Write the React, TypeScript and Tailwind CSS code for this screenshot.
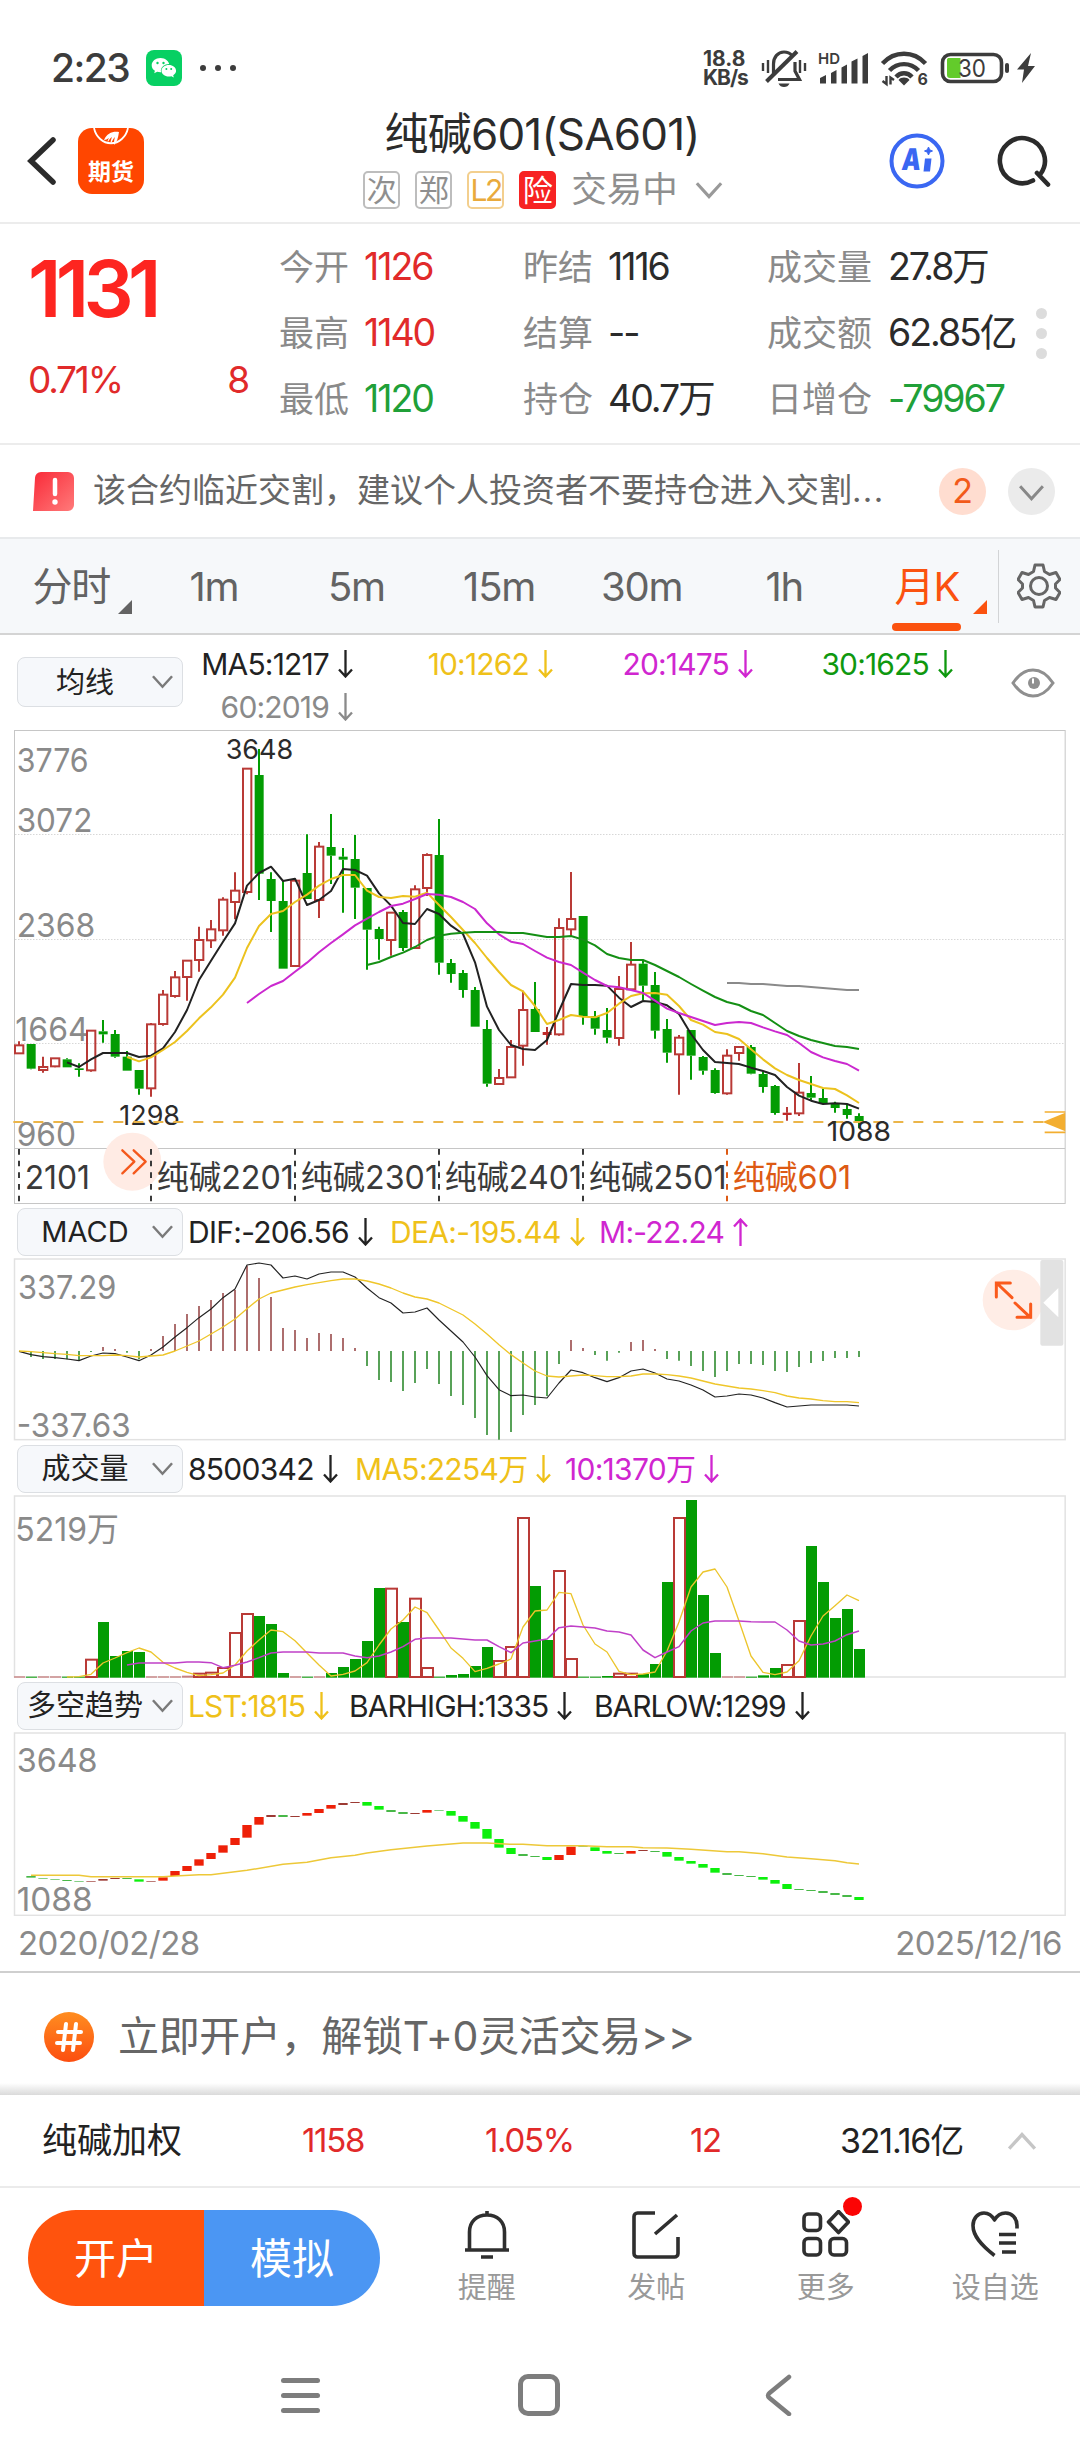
import type { ReactNode } from 'react';
import { clsx } from 'clsx';

// Chart units: three per pixel, one candle every 36 units.
const STEP = 36;
const FIRST_X = 57;
const RED = '#b93a36';
const GREEN = '#039c03';

const xAt = (i: number) => FIRST_X + i * STEP;
const toPoints = (values: number[], start = 0) => values.map((y, i) => `${xAt(i + start)},${y}`).join(' ');

type Candle = ['r' | 'g', number, number, number, number];

// [direction, high, body top, body bottom, low]
const CANDLES: Candle[] = [
  ['r', 964, 976, 1000, 1000], ['g', 972, 972, 1046, 1048], ['r', 1010, 1041, 1050, 1058], ['r', 1015, 1015, 1039, 1042],
  ['g', 1015, 1018, 1042, 1042], ['g', 1030, 1045, 1050, 1070], ['r', 932, 932, 1051, 1055], ['g', 900, 934, 943, 968],
  ['g', 930, 942, 1010, 1013], ['g', 993, 1010, 1052, 1052], ['g', 1050, 1050, 1106, 1124], ['r', 909, 913, 1105, 1130],
  ['r', 810, 824, 912, 917], ['r', 753, 772, 828, 833], ['r', 721, 722, 771, 842], ['r', 620, 660, 720, 755],
  ['r', 600, 628, 661, 684], ['r', 532, 539, 631, 647], ['r', 457, 512, 546, 598], ['r', 146, 146, 516, 523],
  ['g', 87, 165, 461, 540], ['g', 457, 477, 543, 636], ['g', 480, 543, 746, 746], ['r', 478, 482, 738, 738],
  ['g', 343, 459, 537, 537], ['r', 366, 380, 540, 594], ['g', 282, 381, 407, 492], ['g', 384, 410, 419, 578],
  ['g', 345, 417, 503, 597], ['g', 504, 504, 629, 749], ['g', 620, 627, 657, 719], ['r', 577, 578, 660, 707],
  ['g', 570, 576, 684, 693], ['r', 496, 508, 684, 684], ['r', 400, 405, 504, 528], ['g', 297, 405, 728, 764],
  ['g', 717, 729, 762, 788], ['g', 750, 759, 810, 833], ['g', 801, 810, 920, 920], ['g', 900, 927, 1091, 1100],
  ['r', 1047, 1074, 1092, 1094], ['r', 960, 981, 1072, 1073], ['r', 812, 870, 977, 1037], ['g', 786, 867, 936, 936],
  ['r', 921, 936, 945, 974], ['r', 595, 624, 943, 947], ['r', 456, 597, 628, 648], ['g', 588, 588, 891, 914],
  ['g', 873, 888, 926, 944], ['g', 864, 930, 953, 970], ['r', 768, 807, 954, 977], ['r', 666, 734, 808, 808],
  ['g', 720, 731, 797, 840], ['g', 756, 795, 932, 956], ['g', 897, 927, 998, 1028], ['r', 945, 953, 1003, 1124],
  ['g', 930, 930, 1007, 1079], ['g', 1008, 1011, 1052, 1064], ['g', 1045, 1050, 1119, 1121], ['r', 988, 1007, 1120, 1124],
  ['r', 981, 981, 999, 1022], ['g', 975, 981, 1061, 1063], ['g', 1055, 1062, 1101, 1118], ['g', 1095, 1098, 1179, 1184],
  ['r', 1161, 1178, 1185, 1202], ['r', 1029, 1118, 1180, 1188], ['g', 1068, 1119, 1133, 1143], ['g', 1106, 1134, 1151, 1151],
  ['g', 1145, 1150, 1164, 1178], ['g', 1155, 1167, 1185, 1196], ['g', 1180, 1188, 1203, 1225],
];

const MA5 = [
  1027, 1041, 1018, 999, 999, 999, 1011, 1007, 985, 936, 870, 780, 722, 665, 610, 497, 459, 440, 483, 476, 555, 540, 513,
  447, 450, 467, 520, 557, 609, 612, 567, 582, 617, 642, 727, 860, 930, 975, 987, 990, 960, 873, 792, 795, 795, 797, 833,
  861, 843, 846, 856, 882, 942, 990, 1026, 1029, 1032, 1043, 1053, 1065, 1101, 1127, 1142, 1152, 1150, 1152, 1166,
];
const MA10 = [
  1011, 1024, 1012, 990, 966, 933, 895, 862, 824, 773, 684, 618, 582, 573, 546, 524, 497, 477, 465, 465, 512, 531, 534,
  528, 530, 518, 555, 591, 630, 669, 714, 756, 795, 814, 858, 912, 900, 885, 890, 892, 879, 851, 828, 820, 819, 824, 858,
  900, 914, 936, 942, 957, 988, 1018, 1045, 1065, 1080, 1092, 1104, 1107, 1126, 1149,
];
const MA20 = [
  849, 822, 798, 783, 755, 728, 697, 669, 643, 616, 596, 576, 558, 551, 537, 522, 524, 531, 546, 567, 610, 643, 665, 672,
  693, 713, 726, 735, 758, 780, 798, 802, 810, 819, 842, 866, 879, 891, 903, 915, 909, 906, 909, 922, 934, 945, 969, 996,
  1012, 1023, 1032, 1052,
];
const MA30 = [
  735, 726, 711, 698, 681, 660, 647, 641, 638, 636, 636, 636, 639, 639, 645, 651, 651, 648, 659, 676, 702, 714, 720, 720,
  735, 753, 771, 792, 812, 831, 846, 855, 873, 885, 909, 933, 948, 960, 969, 978, 981, 987,
];
const MA60 = [789, 789, 792, 792, 795, 798, 798, 801, 804, 807, 810, 810];

const MACD_ZERO = 453;
const MACD_BARS = [
  453, 471, 477, 477, 478, 482, 456, 441, 447, 458, 478, 447, 408, 372, 342, 318, 300, 279, 270, 197, 234, 291, 384, 390,
  414, 399, 402, 414, 444, 498, 540, 546, 573, 549, 507, 552, 588, 615, 654, 705, 719, 696, 645, 615, 588, 492, 420, 444,
  465, 482, 458, 426, 420, 447, 477, 482, 498, 513, 531, 513, 492, 492, 495, 513, 516, 501, 489, 483, 474, 474, 471,
];
const DIF = [
  454, 464, 470, 473, 477, 482, 468, 459, 461, 471, 482, 465, 441, 411, 383, 353, 327, 293, 267, 195, 189, 195, 234, 228,
  237, 222, 216, 216, 231, 264, 293, 309, 339, 336, 324, 360, 393, 426, 471, 527, 569, 587, 585, 591, 594, 549, 510, 518,
  533, 545, 533, 513, 507, 519, 537, 543, 555, 570, 591, 588, 582, 585, 594, 608, 621, 618, 615, 615, 615, 615, 618,
];
const DEA = [
  453, 455, 458, 461, 463, 467, 467, 467, 465, 467, 471, 468, 465, 453, 438, 423, 402, 381, 357, 326, 297, 279, 270, 261,
  254, 248, 242, 237, 237, 243, 252, 264, 279, 291, 297, 309, 327, 345, 372, 402, 434, 464, 489, 513, 528, 531, 528, 525,
  527, 530, 530, 528, 522, 522, 524, 528, 534, 543, 552, 558, 564, 567, 572, 578, 588, 594, 597, 602, 605, 605, 608,
];

const VOLUME_BASE = 711;
const VOLUMES = [
  709, 710, 709, 709, 710, 710, 656, 546, 648, 633, 636, 709, 709, 709, 707, 698, 695, 681, 576, 519, 528, 552, 699, 709,
  710, 709, 699, 681, 657, 603, 444, 443, 546, 473, 681, 710, 705, 702, 678, 621, 660, 618, 231, 438, 600, 390, 654, 710,
  710, 708, 698, 698, 702, 672, 426, 231, 180, 465, 639, 709, 709, 710, 706, 684, 672, 540, 318, 426, 534, 507, 627,
];
const VOL_MA5 = [
  711, 710, 703, 669, 654, 638, 624, 636, 667, 684, 697, 707, 704, 699, 675, 633, 600, 570, 575, 602, 639, 675, 708, 703,
  693, 668, 615, 567, 540, 501, 518, 570, 624, 655, 695, 685, 672, 657, 561, 513, 510, 457, 461, 555, 612, 636, 694, 704,
  702, 696, 633, 546, 441, 396, 387, 441, 543, 648, 697, 704, 696, 662, 588, 528, 497, 465, 482,
];
const VOL_MA10 = [
  675, 669, 669, 669, 669, 666, 666, 668, 683, 676, 666, 653, 639, 636, 636, 636, 639, 639, 639, 648, 653, 648, 636, 620,
  598, 594, 594, 594, 597, 600, 600, 620, 638, 609, 603, 597, 563, 558, 561, 564, 573, 576, 585, 630, 653, 636, 620, 573,
  549, 543, 543, 543, 545, 546, 546, 570, 603, 615, 612, 603, 584, 573,
];

// [direction, top, bottom], starting from the second candle
const TREND: ['r' | 'g', number, number][] = [
  ['g', 558, 563], ['g', 565, 567], ['g', 567, 569], ['g', 570, 573], ['g', 573, 575], ['r', 573, 575], ['r', 567, 572],
  ['r', 564, 567], ['g', 564, 567], ['g', 568, 575], ['r', 573, 575], ['r', 562, 572], ['r', 543, 558], ['r', 528, 543],
  ['r', 508, 527], ['r', 489, 507], ['r', 466, 488], ['r', 444, 465], ['r', 405, 443], ['r', 381, 404], ['r', 375, 381],
  ['g', 375, 381], ['r', 378, 381], ['r', 369, 377], ['r', 357, 369], ['r', 345, 356], ['r', 339, 345], ['r', 336, 339],
  ['g', 336, 347], ['g', 348, 359], ['g', 360, 366], ['g', 366, 372], ['r', 369, 372], ['r', 360, 368], ['g', 360, 362],
  ['g', 363, 377], ['g', 378, 395], ['g', 396, 416], ['g', 417, 446], ['g', 447, 473], ['g', 474, 492], ['g', 492, 498],
  ['g', 498, 501], ['g', 501, 510], ['r', 495, 510], ['r', 470, 495], ['g', 468, 470], ['g', 472, 483], ['g', 483, 491],
  ['g', 489, 492], ['r', 483, 491], ['r', 480, 483], ['g', 483, 486], ['g', 486, 500], ['g', 501, 512], ['g', 513, 521],
  ['g', 522, 533], ['g', 534, 548], ['g', 549, 555], ['g', 555, 558], ['g', 558, 561], ['g', 561, 569], ['g', 570, 581],
  ['g', 582, 597], ['g', 597, 600], ['g', 600, 603], ['g', 603, 609], ['g', 609, 615], ['g', 615, 621], ['g', 621, 630],
];
const LST: [number, number][] = [
  [1, 556], [5, 556], [6, 560], [12, 560], [13, 558], [15, 554], [16, 554], [17, 550], [19, 541], [22, 523], [24, 517],
  [26, 503], [28, 496], [29, 489], [31, 479], [33, 472], [34, 468], [37, 459], [39, 459], [41, 463], [42, 463], [44, 467],
  [47, 467], [49, 470], [51, 470], [52, 473], [54, 474], [56, 478], [59, 485], [60, 485], [62, 491], [64, 501], [66, 506],
  [68, 512], [69, 518], [70, 522],
];

const QUOTES = [
  [
    { label: '今开', value: '1126', color: 'text-[#e12a2a]' },
    { label: '最高', value: '1140', color: 'text-[#e12a2a]' },
    { label: '最低', value: '1120', color: 'text-[#20a038]' },
  ],
  [
    { label: '昨结', value: '1116', color: 'text-[#2b2b2b]' },
    { label: '结算', value: '--', color: 'text-[#2b2b2b]' },
    { label: '持仓', value: '40.7万', color: 'text-[#2b2b2b]' },
  ],
  [
    { label: '成交量', value: '27.8万', color: 'text-[#2b2b2b]' },
    { label: '成交额', value: '62.85亿', color: 'text-[#2b2b2b]' },
    { label: '日增仓', value: '-79967', color: 'text-[#20a038]' },
  ],
];

const PERIODS = ['分时', '1m', '5m', '15m', '30m', '1h', '月K'];

const CONTRACTS = [
  { at: 57, text: '2101', x: 74, w: 196 },
  { at: 453, text: '纯碱2201', x: 470, w: 412 },
  { at: 885, text: '纯碱2301', x: 902, w: 412 },
  { at: 1317, text: '纯碱2401', x: 1334, w: 412 },
  { at: 1749, text: '纯碱2501', x: 1766, w: 414 },
  { at: 2181, text: '纯碱601', x: 2198, w: 356 },
];

interface LabelProps {
  x: number;
  y: number;
  w: number;
  size?: number;
  fill?: string;
  children: string;
}

function Label({ x, y, w, size = 99, fill = '#8a8a8a', children }: LabelProps) {
  return (
    <text x={x} y={y} fontSize={size} fill={fill} textLength={w} lengthAdjust="spacingAndGlyphs">
      {children}
    </text>
  );
}

function Line({ points, color, width = 6 }: { points: string; color: string; width?: number }) {
  return <polyline points={points} fill="none" stroke={color} strokeWidth={width} strokeLinejoin="round" />;
}

function Chevron({ className, up }: { className?: string; up?: boolean }) {
  return (
    <svg viewBox="0 0 22 14" className={className} fill="none" stroke="currentColor" strokeWidth="2.6">
      <path d={up ? 'M1 13 11 2l10 11' : 'M1 1l10 11L21 1'} />
    </svg>
  );
}

function Arrow({ up }: { up?: boolean }) {
  return (
    <svg viewBox="0 0 15 28" className={clsx('ml-[9px] h-7 w-[15px] shrink-0', up && 'rotate-180')} fill="none" stroke="currentColor" strokeWidth="2.3">
      <path d="M7.5 0v26M1 19.5l6.5 7 6.5-7" />
    </svg>
  );
}

function Legend({ text, color, up, className }: { text: string; color: string; up?: boolean; className?: string }) {
  return (
    <div className={clsx('flex items-center whitespace-nowrap text-[30px] leading-none', color, className)}>
      <span>{text}</span>
      <Arrow up={up} />
    </div>
  );
}

function Picker({ label, tall }: { label: string; tall?: boolean }) {
  return (
    <button
      className={clsx(
        'flex w-[166px] shrink-0 items-center rounded-lg border border-[#dcdfe3] bg-[#f6f8fb] pr-[9px] text-[29px] leading-none text-[#222]',
        tall ? 'h-[50px]' : 'h-12',
      )}
    >
      <span className="flex-1 whitespace-nowrap text-center">{label}</span>
      <Chevron className="h-[14px] w-[21px] shrink-0 text-[#7a7a7a]" />
    </button>
  );
}

function StatusBar() {
  return (
    <div className="flex h-[106px] items-center pt-[30px] pl-[51px] text-[#3c3c3c]">
      <span className="w-[95px] text-[39px] font-medium tracking-[-0.04em]">2:23</span>
      <svg viewBox="0 0 36 36" className="size-9">
        <rect width="36" height="36" rx="8" fill="#07d063" />
        <path d="M14.5 8C9.600 8 5.700 11.200 5.700 15.200c0 2.300 1.200 4.200 3.200 5.500l-.7 2.600 3-1.500c1 .3 2.200.5 3.300.5 4.900 0 8.800-3.200 8.800-7.100S19.400 8 14.500 8z" fill="#fff" />
        <ellipse cx="22.800" cy="20.700" rx="8" ry="6.700" fill="#07d063" />
        <path d="M22.800 15c-4.100 0-7.300 2.600-7.300 5.800s3.200 5.800 7.300 5.800c.9 0 1.800-.1 2.600-.4l2.400 1.400-.6-2.300c1.800-1.100 2.900-2.700 2.900-4.500 0-3.200-3.200-5.800-7.300-5.800z" fill="#fff" />
        <g fill="#07d063">
          <circle cx="11.500" cy="13" r="1.200" />
          <circle cx="17.500" cy="13" r="1.200" />
          <circle cx="20.400" cy="19" r="1" />
          <circle cx="25.200" cy="19" r="1" />
        </g>
      </svg>
      <div className="ml-[18px] flex gap-[9px]">
        <i className="size-[6px] rounded-full bg-[#3c3c3c]" />
        <i className="size-[6px] rounded-full bg-[#3c3c3c]" />
        <i className="size-[6px] rounded-full bg-[#3c3c3c]" />
      </div>
      <div className="ml-auto flex w-[377px] items-center">
        <div className="w-[58px] text-[21px] leading-[19px] font-bold">
          <p>18.8</p>
          <p className="tracking-[-0.05em]">KB/s</p>
        </div>
        {/* muted bell */}
        <svg viewBox="0 0 46 38" className="h-[38px] w-[46px]" fill="none" stroke="currentColor" strokeWidth="3.200">
          <path d="M12.500 27V15C12.500 8 17 3 23 3c3.500 0 6 1.200 7.800 3.500M34 13v9l4.500 8.500H17" />
          <path d="M5.500 32.500 36 2.500" strokeWidth="4" />
          <path d="M2 14v8M7 11v13M39 11v13M44 14v8" strokeWidth="2.400" />
          <path d="M17.500 34.500h11c-1 2.400-3 3.500-5.500 3.500s-4.500-1.100-5.500-3.500z" fill="currentColor" stroke="none" />
        </svg>
        <svg viewBox="0 0 50 34" className="ml-[11px] h-[34px] w-[50px] overflow-visible" fill="currentColor">
          <text x="0" y="12.500" fontSize="15" fontWeight="600" textLength="22" lengthAdjust="spacingAndGlyphs">HD</text>
          <path d="M2 27l6-3v8.500H2zM13 22l5.500-3v13.500H13zM23.500 16.500l5.500-3v19h-5.500zM33.500 10.500l6-3v25h-6zM44.500 5l5.500-3v30.500h-5.500z" />
        </svg>
        <svg viewBox="0 0 48 36" className="ml-[12px] h-9 w-12 overflow-visible" fill="none" stroke="currentColor" strokeWidth="4.400">
          <path d="M2.500 13.500C14.500.5 33.500.5 45.500 13.500" />
          <path d="M9.500 20.500c8-8.500 21-8.500 29 0" />
          <path d="M16 27c4.500-5 11.500-5 16 0" />
          <path d="M18.500 30c2.500-3.200 8.500-3.200 11 0L24 35.500z" fill="currentColor" stroke="none" />
          <path d="M6.500 26v8l-4-3M10.500 34.500v-7l3.500 2.500" strokeWidth="2.400" />
          <text x="37.500" y="34.500" fontSize="16" fontWeight="700" fill="currentColor" stroke="none">6</text>
        </svg>
        <svg viewBox="0 0 98 32" className="ml-[12px] h-8 w-[98px] shrink-0">
          <rect x="2.500" y="2.500" width="59" height="27" rx="8" fill="none" stroke="currentColor" strokeWidth="3.600" />
          <path d="M8 6h12.500v20H10a3 3 0 0 1-3-3V9a3 3 0 0 1 1-3z" fill="#63cb2b" />
          <text x="18" y="24.500" fontSize="24" fill="#3c3c3c" textLength="28" lengthAdjust="spacingAndGlyphs">30</text>
          <rect x="65" y="11" width="4" height="10" rx="2" fill="currentColor" />
          <path d="M91 1 77 17.500h7L82 31l13-17h-7z" fill="currentColor" />
        </svg>
      </div>
    </div>
  );
}

function Badge({ className, children }: { className: string; children: ReactNode }) {
  return (
    <span className={clsx('flex h-[38px] w-[37px] items-center justify-center rounded-[5px] border-2 text-[30px] leading-none', className)}>
      {children}
    </span>
  );
}

function Header() {
  return (
    <header className="flex h-[118px] border-b-2 border-[#ececec]">
      <div className="flex w-[340px] items-start pt-[22px] pl-[27px]">
        <svg viewBox="0 0 30 50" className="mt-2 h-[50px] w-[30px]" fill="none" stroke="#2b2b2b" strokeWidth="5.500" strokeLinecap="round">
          <path d="M26 4 4 25l22 21" />
        </svg>
        <div className="ml-[21px] flex h-[66px] w-[66px] flex-col items-center overflow-hidden rounded-[14px] bg-[#ff4600]">
          <svg viewBox="0 0 40 24" className="h-6 w-10 shrink-0">
            <path d="M3 0a17.500 20 0 0 0 34 0" fill="none" stroke="#fff" strokeWidth="1.800" />
            <path d="M13 12C16 5 22 3 28 4c-1 6-2 10-5 13 0-3 0-5 1-8-2 2-3 4-4 7-1-2 0-4 1-7-2 1-3 3-4 5-1-1 0-2 1-4-2 1-3 2-5 2z" fill="#fff" />
          </svg>
          <span className="mt-2 text-[23px] leading-6 font-bold text-white">期货</span>
        </div>
      </div>
      <div className="flex w-[404px] flex-col items-center">
        <h1 className="mt-[4px] text-[44px] leading-[48px] tracking-[-0.018em] whitespace-nowrap text-[#2b2b2b]">纯碱601(SA601)</h1>
        <div className="mt-[13px] flex items-center gap-[15px] pl-[2px]">
          <Badge className="border-[#bdbdbd] text-[#8f8f8f]">次</Badge>
          <Badge className="border-[#bdbdbd] text-[#8f8f8f]">郑</Badge>
          <Badge className="border-[#f3cf8e] text-[#e9aa3c] tracking-[-0.08em]">L2</Badge>
          <Badge className="border-[#f72323] bg-[#f72323] text-white">险</Badge>
          <span className="text-[35.5px] leading-none text-[#8f8f8f]">交易中</span>
          <Chevron className="ml-[2px] h-[17px] w-7 text-[#999]" />
        </div>
      </div>
      <div className="flex flex-1 items-start gap-[52px] pt-[27px] pl-[145px]">
        <svg viewBox="0 0 56 56" className="size-14 shrink-0">
          <circle cx="28" cy="28" r="25.500" fill="none" stroke="#3a67f2" strokeWidth="4" />
          <text x="12" y="37.500" fontSize="30" fontWeight="900" fill="#3a67f2" textLength="19" lengthAdjust="spacingAndGlyphs" transform="skewX(-6) translate(4 0)">A</text>
          <path d="M36 25.500h6.500l-1.500 13h-6.500z" fill="#3a67f2" />
          <path d="M39.500 14l1.200 2.800 2.800 1.200-2.800 1.200-1.200 2.800-1.200-2.800-2.800-1.200 2.800-1.200z" fill="#3a67f2" stroke="#3a67f2" />
        </svg>
        <svg viewBox="0 0 54 54" className="mt-px size-[54px] shrink-0" fill="none" stroke="#2b2b2b" strokeWidth="4.600" strokeLinecap="round">
          <path d="M36 46.500A22.500 22.500 0 1 1 43.500 40M40 39l11 11.500" />
        </svg>
      </div>
    </header>
  );
}

function QuotePanel() {
  const widths = ['w-[244px]', 'w-[244px]', 'w-[312px]'];
  const labels = ['w-[85px]', 'w-[85px]', 'w-[121px]'];
  return (
    <section className="relative flex h-[221px] border-b-2 border-[#ececec]">
      <div className="w-[279px] shrink-0 pl-[28px]">
        <p className="mt-[25px] text-[79px] leading-[79px] font-semibold tracking-[-0.072em] text-[#fd2520]">1131</p>
        <div className="mt-[32px] flex w-[220px] justify-between text-[37px] leading-[40px] tracking-[-0.06em] text-[#e12a2a]">
          <span>0.71%</span>
          <span>8</span>
        </div>
      </div>
      {QUOTES.map((column, i) => (
        <dl key={column[0].label} className={clsx('flex flex-col pt-[10px]', widths[i])}>
          {column.map(({ label, value, color }) => (
            <div key={label} className="flex h-[66px] items-center leading-none whitespace-nowrap">
              <dt className={clsx('shrink-0 text-[35px] text-[#8a8a8a]', labels[i])}>{label}</dt>
              <dd className={clsx('text-[37.5px] tracking-[-0.055em]', color)}>{value}</dd>
            </div>
          ))}
        </dl>
      ))}
      <div className="absolute top-[84px] right-[33px] flex flex-col gap-[9px]">
        <i className="size-[11px] rounded-full bg-[#dcdcdc]" />
        <i className="size-[11px] rounded-full bg-[#dcdcdc]" />
        <i className="size-[11px] rounded-full bg-[#dcdcdc]" />
      </div>
    </section>
  );
}

function Notice() {
  return (
    <div className="flex h-[92px] items-center pl-[33px]">
      <svg viewBox="0 0 41 39" className="h-[39px] w-[41px]">
        <defs>
          <linearGradient id="alert" x1="0" y1="0" x2="1" y2="1">
            <stop offset="0" stopColor="#f92a38" />
            <stop offset="1" stopColor="#ff7a7a" />
          </linearGradient>
        </defs>
        <path d="M8 0h27a6 6 0 0 1 6 6v27a6 6 0 0 1-6 6H0L2 6a6 6 0 0 1 6-6z" fill="url(#alert)" />
        <path d="M22 8v14" stroke="#fff" strokeWidth="4.500" strokeLinecap="round" />
        <circle cx="22" cy="30" r="2.700" fill="#fff" />
      </svg>
      <p className="ml-[19px] w-[801px] text-[33px] whitespace-nowrap text-[#666]">
        该合约临近交割，建议个人投资者不要持仓进入交割<span className="tracking-[0.04em]">...</span>
      </p>
      <span className="ml-[45px] flex size-[47px] items-center justify-center rounded-full bg-[#ffddd0] text-[34px] leading-none text-[#f25a1a]">2</span>
      <span className="ml-[22px] flex size-[47px] items-center justify-center rounded-full bg-[#ebebeb]">
        <Chevron className="mt-1 h-4 w-[25px] text-[#888]" />
      </span>
    </div>
  );
}

function Corner({ className }: { className: string }) {
  return (
    <svg viewBox="0 0 14 14" className={clsx('absolute size-[14px]', className)} fill="currentColor">
      <path d="M14 0v14H0z" />
    </svg>
  );
}

function PeriodTabs() {
  return (
    <nav className="flex h-[98px] items-center border-t-2 border-b-2 border-t-[#e8eaec] border-b-[#d4d4d4] bg-[#f6f8fa]">
      {PERIODS.map((period, i) => {
        const active = period === '月K';
        return (
          <button
            key={period}
            className={clsx(
              'relative flex h-full w-[142.600px] items-center justify-center pt-[2px] text-[40px] tracking-[-0.03em]',
              active ? 'text-[#fb520f]' : 'text-[#636363]',
            )}
          >
            {period}
            {active && <span className="absolute bottom-[2px] left-[36px] h-2 w-[69px] rounded-full bg-[#fb520f]" />}
            {i === 0 && <Corner className="bottom-[19px] left-[118px]" />}
            {active && <Corner className="right-[11px] bottom-[19px]" />}
          </button>
        );
      })}
      <div className="h-[73px] w-px bg-[#d2d4d6]" />
      <svg viewBox="0 0 44 46" className="ml-[18px] h-[46px] w-11" fill="none" stroke="#666" strokeWidth="3" strokeLinejoin="round">
        <path d="M18 2h8l1.500 6.500 5 3L39 9.500l4 7-4.500 4.500v4l4.500 4.500-4 7-6.500-2-5 3L26 44h-8l-1.500-6.500-5-3L5 36.500l-4-7L5.500 25v-4L1 16.500l4-7 6.500 2 5-3z" />
        <circle cx="22" cy="23" r="8.500" />
      </svg>
    </nav>
  );
}

function MaLegend() {
  return (
    <div className="flex h-[95px] pl-[17px]">
      <div className="pt-[22px]">
        <Picker label="均线" tall />
      </div>
      <div className="-ml-[30px] grid w-[800px] grid-cols-4 content-start justify-items-end gap-y-[13px] pt-[14px] tracking-[-0.052em]">
        <Legend text="MA5:1217" color="text-[#222]" />
        <Legend text="10:1262" color="text-[#efc11a]" />
        <Legend text="20:1475" color="text-[#d026d0]" />
        <Legend text="30:1625" color="text-[#0f980f]" />
        <Legend text="60:2019" color="text-[#8a8a8a]" />
      </div>
      <svg viewBox="0 0 44 30" className="mt-[33px] ml-[58px] h-[30px] w-11" fill="none" stroke="#8f8f8f" strokeWidth="3">
        <path d="M2 15C8 6 15 2 22 2s14 4 20 13c-6 9-13 13-20 13S8 24 2 15z" />
        <circle cx="23" cy="15" r="6" fill="#8f8f8f" stroke="none" />
        <path d="M22 10.500v5" stroke="#fff" strokeWidth="2" />
      </svg>
    </div>
  );
}

function CandleChart() {
  return (
    <svg viewBox="0 30 3240 1425" className="block h-[475px] w-[1080px]">
      <rect x="43.500" y="31.500" width="3152" height="1419" fill="none" stroke="#c6c6c6" strokeWidth="3" />
      <path d="M43 1285.500H3195" stroke="#c6c6c6" strokeWidth="3" />
      <path d="M46 343.500H3195M46 658.500H3195M46 970.500H3195" stroke="#c4c4c4" strokeWidth="3" strokeDasharray="3 6" />
      <Label x={50} y={155} w={216}>3776</Label>
      <Label x={50} y={335} w={227}>3072</Label>
      <Label x={50} y={650} w={236}>2368</Label>
      <Label x={46} y={962} w={220}>1664</Label>
      <Label x={50} y={1277} w={178}>960</Label>

      <circle cx="397" cy="1325" r="87" fill="#ffebe4" />
      {CONTRACTS.map(({ at, text, x, w }, i) => {
        const color = i === CONTRACTS.length - 1 ? '#dd5a14' : '#3a3a3a';
        return (
          <g key={text}>
            <path d={`M${at} 1287V1450`} stroke={color} strokeWidth="6" strokeDasharray="17 18" />
            <Label x={x} y={1406} w={w} fill={color}>{text}</Label>
          </g>
        );
      })}
      <path d="M367 1291l36 34-36 35M401 1291l36 34-36 35" fill="none" stroke="#f4581c" strokeWidth="7" strokeLinecap="round" strokeLinejoin="round" />

      {CANDLES.map(([dir, high, top, bottom, low], i) => {
        const x = xAt(i);
        const hollow = dir === 'r' && bottom - top > 8 && i !== 44;
        return (
          <g key={i} stroke={dir === 'r' ? RED : GREEN} strokeWidth="6">
            <path d={`M${x} ${high}V${top}M${x} ${bottom}V${low}`} />
            {hollow ? (
              <rect x={x - 12} y={top} width="25" height={bottom - top} fill="none" />
            ) : (
              <rect x={x - 13} y={top} width="27" height={bottom - top} fill={dir === 'r' ? '#c02828' : GREEN} stroke="none" />
            )}
          </g>
        );
      })}
      <Line points={toPoints(MA5, 4)} color="#222" />
      <Line points={toPoints(MA10, 9)} color="#ecc21e" />
      <Line points={toPoints(MA20, 19)} color="#cb28cf" />
      <Line points={toPoints(MA30, 29)} color="#148f14" />
      <Line points={toPoints(MA60, 59)} color="#8a8a8a" />

      <Label x={677} y={116} w={203} size={83} fill="#2b2b2b">3648</Label>
      <Label x={358} y={1216} w={182} size={83} fill="#2b2b2b">1298</Label>
      <path d="M40 1206H3130" stroke="#ebb549" strokeWidth="6" strokeDasharray="30 30" />
      <Label x={2480} y={1262} w={193} size={83} fill="#2b2b2b">1088</Label>
      <path d="M3128 1206l68-28v56z" fill="#f3ae30" />
      <path d="M3134 1176h62M3134 1237h62" stroke="#f3ae30" strokeWidth="5" />
    </svg>
  );
}

function SubFrame({ top, frame = 543, children }: { top: number; frame?: number; children: ReactNode }) {
  return (
    <svg viewBox={`0 ${top} 3240 552`} className="block h-[184px] w-[1080px]">
      <rect x="43.500" y={top + 3} width="3152" height={frame} fill="none" stroke="#e2e2e2" strokeWidth="4.500" />
      {children}
    </svg>
  );
}

function MacdChart() {
  return (
    <SubFrame top={174} frame={542}>
      <Label x={54} y={296} w={295}>337.29</Label>
      <Label x={50} y={710} w={342}>-337.63</Label>
      {MACD_BARS.map((y, i) => (
        <path key={i} d={`M${xAt(i)} ${MACD_ZERO}V${y}`} stroke={y < MACD_ZERO ? '#ad6e6e' : '#58a258'} strokeWidth="6" />
      ))}
      <Line points={toPoints(DIF)} color="#222" width={3.5} />
      <Line points={toPoints(DEA)} color="#efc62a" width={4} />
      <circle cx="3039" cy="300" r="91" fill="#ffede6" />
      <path
        d="M3036 293l-46-44M3031 249h-42v42M3045 309l46 43M3051 352h41v-40"
        fill="none" stroke="#fa5a1c" strokeWidth="9" strokeLinecap="round"
      />
      <rect x="3121" y="180" width="69" height="257" rx="6" fill="#e2e2e2" />
      <path d="M3130 308l45-44v88z" fill="#fff" />
    </SubFrame>
  );
}

function VolumeChart() {
  return (
    <SubFrame top={165}>
      <Label x={46} y={303} w={311}>5219万</Label>
      {VOLUMES.map((top, i) => {
        const x = xAt(i);
        const rising = CANDLES[i][0] === 'r' && i !== 44;
        const height = VOLUME_BASE - top;
        return rising && height > 8 ? (
          <rect key={i} x={x - 15} y={top + 3} width="33" height={height - 3} fill="#fff" stroke={RED} strokeWidth="6" />
        ) : (
          <rect key={i} x={x - 15} y={top} width="33" height={height + 2} fill={rising ? '#c88080' : GREEN} />
        );
      })}
      <Line points={toPoints(VOL_MA5, 4)} color="#ecc52c" width={4} />
      <Line points={toPoints(VOL_MA10, 9)} color="#c040c8" width={4.5} />
    </SubFrame>
  );
}

function TrendChart() {
  return (
    <SubFrame top={126} frame={547}>
      <Label x={50} y={247} w={243}>3648</Label>
      <Label x={50} y={662} w={228}>1088</Label>
      {TREND.map(([dir, top, bottom], i) => {
        const thin = bottom - top < 7;
        const red = thin ? '#9c3a34' : '#ee2008';
        const green = thin ? '#48b848' : '#0cf00c';
        return <rect key={i} x={xAt(i + 1) - 14} y={top} width="28" height={bottom - top} fill={dir === 'r' ? red : green} />;
      })}
      <Line points={LST.map(([i, y]) => `${xAt(i)},${y}`).join(' ')} color="#edc838" width={4.5} />
    </SubFrame>
  );
}

function IndicatorRow({ label, children }: { label: string; children: ReactNode }) {
  return (
    <div className="flex h-[53px] items-center pl-[17px]">
      <Picker label={label} />
      <div className="flex items-center pl-[5px] tracking-[-0.045em]">{children}</div>
    </div>
  );
}

function Action({ label, badge, children }: { label: string; badge?: boolean; children: ReactNode }) {
  return (
    <button className="relative flex w-[169.500px] flex-col items-center">
      <svg viewBox="0 0 48 50" className="h-[50px] w-12" fill="none" stroke="#2f2f2f" strokeWidth="3.600" strokeLinejoin="round">
        {children}
      </svg>
      <span className="mt-[11px] text-[29px] leading-[34px] text-[#999]">{label}</span>
      {badge && <i className="absolute -top-[13px] left-[102px] size-[19px] rounded-full bg-[#fb0404]" />}
    </button>
  );
}

function BottomBar() {
  return (
    <div className="flex h-[134px] items-start pt-[22px] pl-[28px]">
      <div className="flex h-24 w-[352px] overflow-hidden rounded-full text-[42px] text-white">
        <button className="flex-1 bg-[#ff530d]">开户</button>
        <button className="flex-1 bg-[#4b96f3]">模拟</button>
      </div>
      <div className="ml-[22px] flex">
        <Action label="提醒">
          <path d="M2 40h44M6.500 40V22C6.500 11.500 14 5 24 5s17.500 6.500 17.500 17v18M24 1v4M18 47h12" />
        </Action>
        <Action label="发帖">
          <path d="M23 3H5.500A3.500 3.500 0 0 0 2 6.500v37A3.500 3.500 0 0 0 5.500 47h37a3.500 3.500 0 0 0 3.500-3.500V27M45 5 23 24" />
        </Action>
        <Action label="更多" badge>
          <rect x="2" y="4" width="16.500" height="16.500" rx="4" />
          <rect x="2" y="28.500" width="16.500" height="16.500" rx="4" />
          <rect x="28" y="28.500" width="16.500" height="16.500" rx="4" />
          <path d="M36.500 1.500 46.500 12l-10 10.500-10-10.500z" />
        </Action>
        <Action label="设自选">
          <path d="M23.500 45.500C10 35 2 26 2 15.500 2 8 7 3 13 3c4 0 8 2.500 10.500 7C26 5.500 30 3 34.500 3 41 3 46 8 46 15.500v3M28 24.500h17M28 33h17M31 42h14" />
        </Action>
      </div>
    </div>
  );
}

export default function App() {
  return (
    <main
      lang="zh-CN"
      className="flex h-[2460px] w-[1080px] flex-col overflow-hidden bg-white font-[Inter,'Noto_Sans_CJK_SC',sans-serif] [&>*]:shrink-0"
    >
      <StatusBar />
      <Header />
      <QuotePanel />
      <Notice />
      <PeriodTabs />
      <MaLegend />
      <CandleChart />

      <IndicatorRow label="MACD">
        <Legend text="DIF:-206.56" color="text-[#222]" className="w-[202px]" />
        <Legend text="DEA:-195.44" color="text-[#efc11a]" className="w-[209px]" />
        <Legend text="M:-22.24" color="text-[#d026d0]" up />
      </IndicatorRow>
      <MacdChart />
      <IndicatorRow label="成交量">
        <Legend text="8500342" color="text-[#222]" className="w-[167px]" />
        <Legend text="MA5:2254万" color="text-[#efc11a]" className="w-[210px]" />
        <Legend text="10:1370万" color="text-[#d026d0]" />
      </IndicatorRow>
      <VolumeChart />
      <IndicatorRow label="多空趋势">
        <Legend text="LST:1815" color="text-[#efc11a]" className="w-[161px] tracking-[-0.03em]" />
        <Legend text="BARHIGH:1335" color="text-[#222]" className="w-[245px] tracking-[-0.032em]" />
        <Legend text="BARLOW:1299" color="text-[#222]" className="tracking-[-0.035em]" />
      </IndicatorRow>
      <TrendChart />

      <div className="flex h-[57px] items-center justify-between border-b-2 border-[#cfcfcf] pr-[18px] pl-[18px] text-[33px] tracking-[-0.017em] text-[#8a8a8a]">
        <span>2020/02/28</span>
        <span>2025/12/16</span>
      </div>

      <div className="relative flex h-[122px] items-center pt-[6px] pl-[44px]">
        <svg viewBox="0 0 50 50" className="size-[50px]">
          <defs>
            <linearGradient id="hash" x1="0" y1="0" x2="0" y2="1">
              <stop offset="0" stopColor="#ff8d20" />
              <stop offset="1" stopColor="#fc4e10" />
            </linearGradient>
          </defs>
          <circle cx="25" cy="25" r="25" fill="url(#hash)" />
          <path d="M22 12l-3 26M32 12l-3 26M14 20h23M13 31h23" stroke="#fff" strokeWidth="4" strokeLinecap="round" />
        </svg>
        <p className="ml-[24px] text-[41px] tracking-[-0.008em] whitespace-nowrap text-[#666]">立即开户，解锁T+0灵活交易&gt;&gt;</p>
        <div className="absolute inset-x-0 bottom-0 h-3 bg-linear-to-b from-transparent to-[#dadada]" />
      </div>

      <div className="flex h-[93px] items-center border-b-2 border-[#ebebeb] pl-[42px] text-[33px] tracking-[-0.04em] whitespace-nowrap text-[#e12a2a]">
        <span className="w-[260px] text-[35px] tracking-normal text-[#222]">纯碱加权</span>
        <span className="w-[183px]">1158</span>
        <span className="w-[205px]">1.05%</span>
        <span className="w-[150px]">12</span>
        <span className="w-[167px] text-[34px] tracking-[-0.035em] text-[#222]">321.16亿</span>
        <Chevron up className="h-[18px] w-[30px] text-[#c6c6c6]" />
      </div>

      <BottomBar />

      <div className="flex h-[138px] items-center pt-2 pl-[281px]">
        <div className="flex w-[39px] flex-col gap-[10px]">
          <i className="h-[5px] rounded-full bg-[#7d7d7d]" />
          <i className="h-[5px] rounded-full bg-[#7d7d7d]" />
          <i className="h-[5px] rounded-full bg-[#7d7d7d]" />
        </div>
        <div className="ml-[198px] size-[42px] rounded-[10px] border-5 border-[#7d7d7d]" />
        <svg viewBox="0 0 28 42" className="ml-[205px] h-[42px] w-7" fill="none" stroke="#7d7d7d" strokeWidth="4.500" strokeLinecap="round">
          <path d="M24 3 4.500 19q-3 2.500 0 5L24 40" />
        </svg>
      </div>
    </main>
  );
}
